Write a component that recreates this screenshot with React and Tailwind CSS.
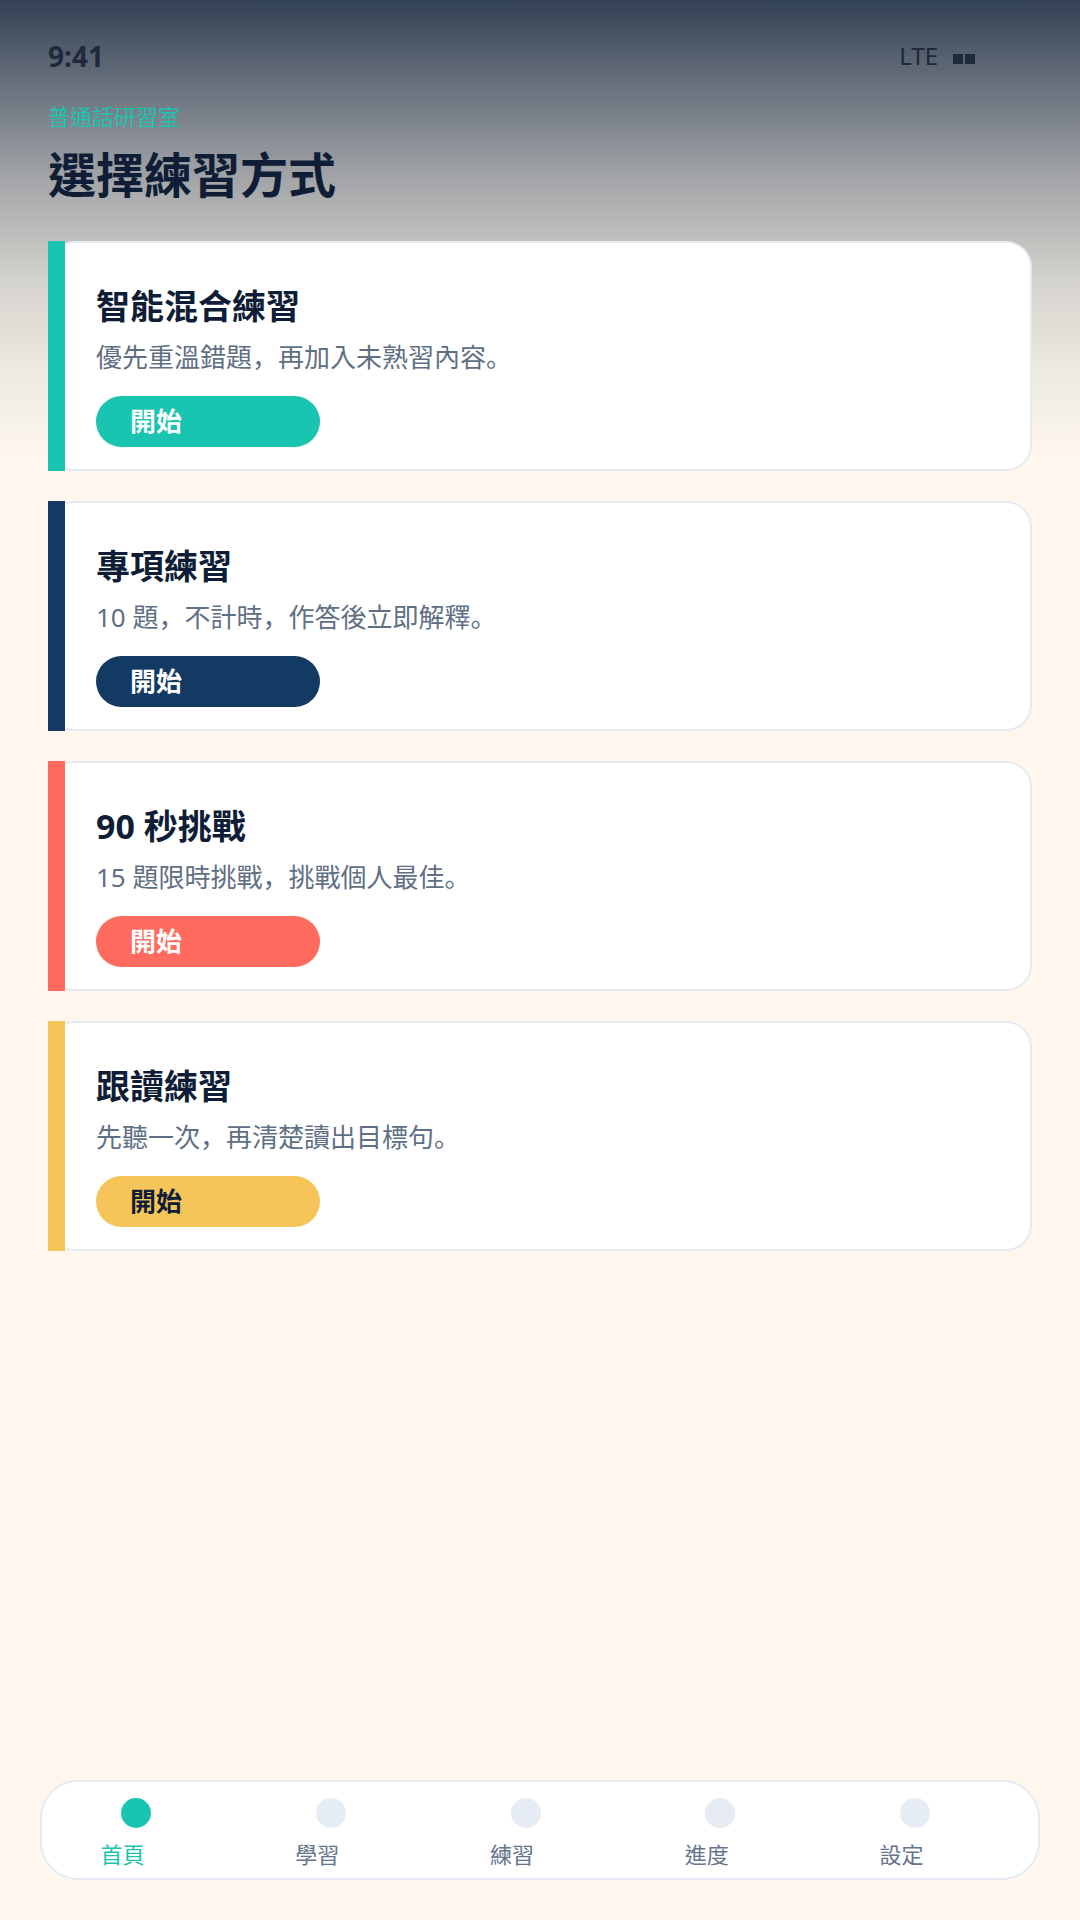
const modes = [
  {
    title: '智能混合練習',
    desc: '優先重溫錯題，再加入未熟習內容。',
    strip: 'bg-[#19c4b0]',
    btn: 'bg-[#19c4b0] text-white',
  },
  {
    title: '專項練習',
    desc: '10 題，不計時，作答後立即解釋。',
    strip: 'bg-[#123a62]',
    btn: 'bg-[#123a62] text-white',
  },
  {
    title: '90 秒挑戰',
    desc: '15 題限時挑戰，挑戰個人最佳。',
    strip: 'bg-[#ff6b5e]',
    btn: 'bg-[#ff6b5e] text-white',
  },
  {
    title: '跟讀練習',
    desc: '先聽一次，再清楚讀出目標句。',
    strip: 'bg-[#f6c55a]',
    btn: 'bg-[#f6c55a] text-[#0f1e36]',
  },
]

const tabs = ['首頁', '學習', '練習', '進度', '設定']

function ModeCard({ mode }) {
  return (
    <div className="relative rounded-[26px] border-2 border-[#e5ebf3] bg-white pl-[46px] pt-[41px] pb-[22px]">
      <div className={`absolute top-[-2px] bottom-[-2px] left-[-2px] w-[17px] ${mode.strip}`} />
      <h2 className="text-[34px] font-bold leading-[44px] text-[#0f1e36]">{mode.title}</h2>
      <p className="mt-[11px] font-['Noto_Sans','Noto_Sans_CJK_JP',sans-serif] text-[26px] leading-[36px] text-[#5f6f84]">
        {mode.desc}
      </p>
      <button className={`mt-[21px] flex h-[51px] w-[224px] items-center rounded-full pl-[34px] text-[26px] font-bold ${mode.btn}`}>
        開始
      </button>
    </div>
  )
}

export default function App() {
  return (
    <div className="flex h-[1920px] w-full flex-col bg-[#fff7ed] bg-[linear-gradient(180deg,#334155_0px,#a3a5a8_180px,#d4d2cc_280px,#eeece4_380px,#fff7ed_460px)] font-['Noto_Sans','Noto_Sans_CJK_TC',sans-serif]">
      {/* status bar */}
      <div className="mt-[39px] flex h-[34px] items-center justify-between pl-[48px] pr-[105px]">
        <span className="text-[28px] font-bold text-[#1e293b]">9:41</span>
        <div className="flex items-center gap-[15px]">
          <span className="text-[24px] leading-none text-[#1e293b]">LTE</span>
          <div className="mt-[6px] flex gap-[2px]">
            <div className="h-[10px] w-[10px] bg-[#1e293b]" />
            <div className="h-[10px] w-[10px] bg-[#1e293b]" />
          </div>
        </div>
      </div>

      <div className="px-[48px]">
        <p className="mt-[28px] text-[22px] leading-[31px] text-[#19c4b0]">普通話研習室</p>
        <h1 className="mt-[13px] text-[48px] font-bold leading-[60px] text-[#0f1e36]">選擇練習方式</h1>

        <div className="mt-[36px] flex flex-col gap-[30px]">
          {modes.map((m) => (
            <ModeCard key={m.title} mode={m} />
          ))}
        </div>
      </div>

      <div className="flex-1" />

      {/* bottom tabs */}
      <nav className="mx-[40px] mb-[40px] flex justify-between rounded-[38px] border-2 border-[#e5ebf3] bg-white pl-[52px] pr-[108px] pt-[16px] pb-[8px]">
        {tabs.map((t, i) => (
          <div key={t} className="flex w-[57px] flex-col items-center">
            <div className={`ml-[27px] h-[30px] w-[30px] rounded-full ${i === 0 ? 'bg-[#19c4b0]' : 'bg-[#e6ecf4]'}`} />
            <span className={`mt-[11px] text-[22px] leading-[31px] whitespace-nowrap ${i === 0 ? 'text-[#19c4b0]' : 'text-[#64748b]'}`}>
              {t}
            </span>
          </div>
        ))}
      </nav>
    </div>
  )
}
